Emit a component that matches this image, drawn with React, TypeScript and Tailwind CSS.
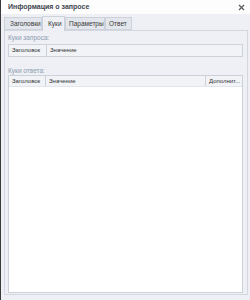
import React from "react";

export default function App() {
  const font = { fontFamily: '"Liberation Sans", Arial, sans-serif' };
  return (
    <div className="w-[250px] h-[300px] flex bg-[#eef0f5] overflow-hidden" style={font}>
      <div className="w-[1px] h-full bg-[#3a3a3a]" />
      <div className="flex-1 flex flex-col">
        <div className="h-[14px] bg-[#fdfdfd] flex items-center justify-between pl-[7px] pr-[4px]">
          <span className="text-[7px] leading-[8px] font-bold text-[#41464f]">Информация о запросе</span>
          <svg width="7" height="7" viewBox="0 0 7 7" className="mr-[1px]">
            <path d="M1 1 L6 6 M6 1 L1 6" stroke="#5a5a5a" strokeWidth="1.2" />
          </svg>
        </div>
        <div className="flex-1 flex flex-col pl-[3px] pr-[2px] pt-[2px] pb-[5px]">
          <div className="h-[14px] flex items-end text-[6.5px] text-[#3a3a3a]">
            <div className="h-[13px] px-[5px] flex items-center border border-[#cdd1d9] bg-[#e3e6ec] w-[38px]">Заголовки</div>
            <div className="h-[15px] px-[5px] flex items-center border border-b-0 border-[#cdd1d9] bg-[#eef0f5] w-[23px] -mb-[1px] relative z-10">Куки</div>
            <div className="h-[13px] px-[3px] flex items-center border border-[#cdd1d9] bg-[#e3e6ec] w-[40px]">Параметры</div>
            <div className="h-[13px] px-[3px] flex items-center border border-[#cdd1d9] bg-[#e3e6ec] w-[27px]">Ответ</div>
          </div>
          <div className="flex-1 flex flex-col border border-[#d3d7df] pl-[3px] pr-[4px] pb-[1px]">
            <div className="h-[12px] flex items-center text-[6.5px] text-[#8c9bb1] mt-[1px]">Куки запроса:</div>
            <div className="h-[13px] flex border border-[#cdd1d9] bg-[#f1f3f7] text-[6px] text-[#333]">
              <div className="w-[38px] border-r border-[#cdd1d9] flex items-center pl-[3px]">Заголовок</div>
              <div className="flex-1 flex items-center pl-[3px]">Значение</div>
            </div>
            <div className="h-[18px] flex items-end text-[6.5px] leading-[8px] text-[#8c9bb1]">Куки ответа:</div>
            <div className="flex-1 flex flex-col border border-[#cdd1d9] bg-white">
              <div className="h-[11px] flex bg-[#f1f3f7] border-b border-[#e2e5eb] text-[6px] text-[#333]">
                <div className="w-[37px] border-r border-[#cdd1d9] flex items-center pl-[3px]">Заголовок</div>
                <div className="flex-1 flex items-center pl-[3px] border-r border-[#cdd1d9]">Значение</div>
                <div className="w-[36px] flex items-center pl-[3px]">Дополнит...</div>
              </div>
              <div className="flex-1 bg-white" />
            </div>
          </div>
        </div>
      </div>
    </div>
  );
}
